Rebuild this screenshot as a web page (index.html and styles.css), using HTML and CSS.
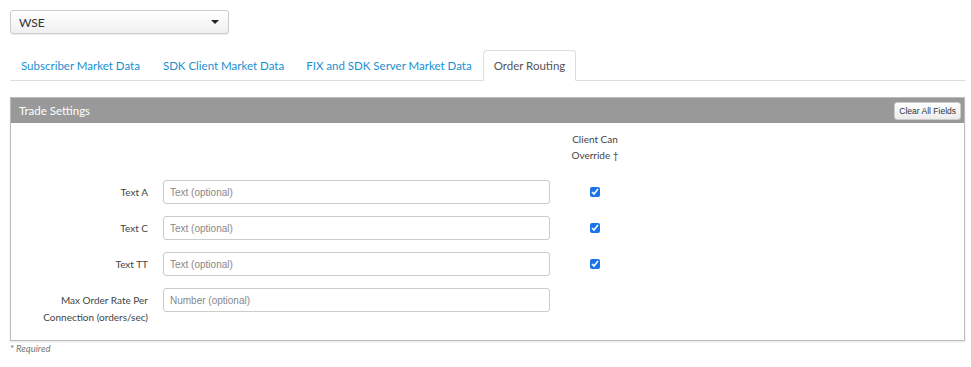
FILE: index.html
```html
<!DOCTYPE html>
<html lang="en">
<head>
  <meta charset="UTF-8" />
  <title>Order Routing</title>
  <link rel="stylesheet" href="styles.css">
</head>
<body>

  <!-- Venue Selector -->
  <div class="venue-select">
    <span>WSE</span>
    <span class="caret"></span>
  </div>

  <!-- Tabs -->
  <ul class="tabs">
    <li><a href="#">Subscriber Market Data</a></li>
    <li><a href="#">SDK Client Market Data</a></li>
    <li><a href="#">FIX and SDK Server Market Data</a></li>
    <li class="active"><a href="#">Order Routing</a></li>
  </ul>

  <!-- Trade Settings Panel -->
  <div class="panel">
    <div class="panel-heading">
      <span>Trade Settings</span>
      <button type="button" class="clear-btn">Clear All Fields</button>
    </div>
    <div class="panel-body">
      <div class="override-head">Client Can<br>Override &dagger;</div>

      <div class="form-grid">
        <label for="textA">Text A</label>
        <input type="text" id="textA" placeholder="Text (optional)" />
        <div class="check-cell"><input type="checkbox" checked /></div>

        <label for="textC">Text C</label>
        <input type="text" id="textC" placeholder="Text (optional)" />
        <div class="check-cell"><input type="checkbox" checked /></div>

        <label for="textTT">Text TT</label>
        <input type="text" id="textTT" placeholder="Text (optional)" />
        <div class="check-cell"><input type="checkbox" checked /></div>

        <label for="maxRate">Max Order Rate Per Connection (orders/sec)</label>
        <input type="text" id="maxRate" placeholder="Number (optional)" />
        <div class="check-cell"></div>
      </div>
    </div>
  </div>

  <div class="required-note">* Required</div>

</body>
</html>
```

FILE: styles.css
```css
body {
  margin: 0;
  padding: 10px 6px 10px 10px;
  font-family: Lato, "Open Sans", sans-serif;
  background-color: white;
  color: #444;
}

/* Venue Selector */
.venue-select {
  width: 219px;
  height: 24px;
  box-sizing: border-box;
  border: 1px solid #ccc;
  border-radius: 3px;
  background: linear-gradient(#fff, #f0f0f0);
  box-shadow: 0 1px 1px rgba(0, 0, 0, 0.08);
  display: flex;
  align-items: center;
  justify-content: space-between;
  padding: 0 8px 0 8px;
  font-size: 12px;
  color: #333;
}

.caret {
  width: 0;
  height: 0;
  border-left: 4px solid transparent;
  border-right: 4px solid transparent;
  border-top: 4px solid #222;
  margin-right: 1px;
}

/* Tabs */
.tabs {
  list-style: none;
  margin: 16px 0 0 0;
  padding: 0;
  display: flex;
  border-bottom: 1px solid #ddd;
}

.tabs li {
  margin-bottom: -1px;
}

.tabs a {
  display: block;
  height: 29px;
  line-height: 30px;
  padding: 0 11px 0 10px;
  font-size: 11.5px;
  color: #1a8fd0;
  text-decoration: none;
  border: 1px solid transparent;
  border-radius: 4px 4px 0 0;
}

.tabs li:nth-child(2) a,
.tabs li:nth-child(3) a {
  padding: 0 10px 0 10px;
}

.tabs li.active a {
  color: #555;
  background-color: white;
  border-color: #ddd #ddd white #ddd;
  padding: 0 10px 0 10px;
}

/* Panel */
.panel {
  margin-top: 16px;
  border: 1px solid #bbb;
  box-shadow: 0 1px 2px rgba(0, 0, 0, 0.1);
}

.panel-heading {
  height: 25px;
  background-color: #999;
  color: white;
  display: flex;
  align-items: center;
  justify-content: space-between;
  padding: 0 3px 0 8px;
  font-size: 11.5px;
}

.clear-btn {
  height: 18px;
  padding: 0 4px;
  font-family: "Liberation Sans", Arial, sans-serif;
  font-size: 8.5px;
  color: #333;
  background: linear-gradient(#fff, #ececec);
  border: 1px solid #ccc;
  border-radius: 3px;
}

.panel-body {
  padding: 8px 0 14px 0;
}

.override-head {
  margin-left: 537px;
  width: 94px;
  text-align: center;
  font-size: 10px;
  line-height: 16px;
  margin-bottom: 17px;
}

.form-grid {
  display: grid;
  grid-template-columns: 137px 387px 94px;
  column-gap: 15px;
  row-gap: 12px;
}

.form-grid label {
  text-align: right;
  font-size: 10px;
  line-height: 17px;
  padding-top: 4px;
  justify-self: end;
  max-width: 125px;
}

.form-grid input[type="text"] {
  height: 24px;
  box-sizing: border-box;
  border: 1px solid #ccc;
  border-radius: 3px;
  padding: 0 6px;
  font-family: "Liberation Sans", Arial, sans-serif;
  font-size: 10px;
}

.form-grid input::placeholder {
  color: #888;
}

.check-cell {
  display: flex;
  justify-content: center;
  align-items: center;
  margin-left: -34px;
}

.check-cell input {
  width: 10px;
  height: 10px;
  margin: 0;
  accent-color: #1a73e8;
}

.required-note {
  margin-top: 2px;
  font-size: 9.5px;
  font-style: italic;
  color: #777;
}
```
